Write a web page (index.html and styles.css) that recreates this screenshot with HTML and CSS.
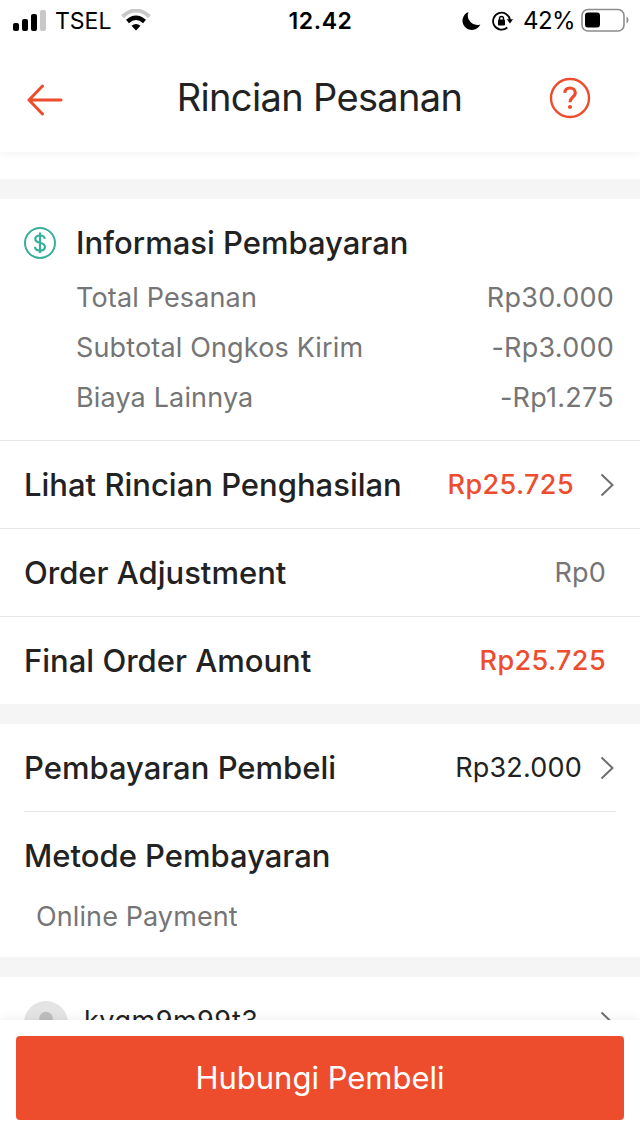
FILE: index.html
```html
<!DOCTYPE html>
<html lang="id">

<head>
  <meta charset="UTF-8">
  <meta name="viewport" content="width=device-width, initial-scale=1.0">
  <title>Rincian Pesanan</title>
  <link rel="stylesheet" href="styles.css">
</head>

<body>
  <div class="status">
    <div class="status-left">
      <svg class="signal" width="34" height="22" viewBox="0 0 34 22">
        <rect x="1" y="14" width="6" height="8" rx="2"/>
        <rect x="10" y="10" width="6" height="12" rx="2"/>
        <rect x="19" y="5" width="6" height="17" rx="2"/>
        <rect x="28" y="1" width="6" height="21" rx="2" fill="#c8c8c8"/>
      </svg>
      <span class="carrier">TSEL</span>
      <svg class="wifi" width="30" height="22" viewBox="0 0 30 22">
        <path d="M1.500 7.500Q15 -4.500 28.500 7.500" fill="none" stroke="#c8c8c8" stroke-width="4"/>
        <path d="M6.500 12.500Q15 5 23.500 12.500" fill="none" stroke="#000" stroke-width="4.400"/>
        <path d="M10.500 16.800Q15 13 19.500 16.800L15 21.500Z"/>
      </svg>
    </div>
    <time class="clock">12.42</time>
    <div class="status-right">
      <svg class="moon" width="20" height="20" viewBox="0 0 20 20">
        <path d="M7.500 1A9.300 9.300 0 1 0 19.300 13.500A9.500 9.500 0 0 1 7.500 1Z"/>
      </svg>
      <svg class="lock" width="21" height="20" viewBox="0 0 21 20">
        <path d="M15.300 16.500A8.500 8.500 0 1 1 18 9" fill="none" stroke="#000" stroke-width="1.800"/>
        <path d="M14.800 8.300H21L18 12.500Z"/>
        <rect x="6" y="8.500" width="7" height="6" rx="1"/>
        <path d="M7.500 9V7.500a2 2 0 0 1 4 0V9" fill="none" stroke="#000" stroke-width="1.400"/>
      </svg>
      <span class="percent">42%</span>
      <svg class="battery" width="48" height="24" viewBox="0 0 48 24">
        <rect x="1" y="1.500" width="42" height="21.500" rx="6" fill="none" stroke="#8c8c8c" stroke-width="1.600"/>
        <rect x="4" y="4.500" width="15" height="15" rx="3"/>
        <path d="M45.500 8.500Q47.500 9.500 47.500 12T45.500 15.500Z" fill="#8c8c8c"/>
      </svg>
    </div>
  </div>

  <header class="header">
    <svg class="back" width="36" height="32" viewBox="0 0 36 32">
      <path d="M34 16H2M15.500 2L2 16L15.500 30" fill="none" stroke="#ee4d2d" stroke-width="3" stroke-linecap="round" stroke-linejoin="round"/>
    </svg>
    <h1 class="title">Rincian Pesanan</h1>
    <svg class="help" width="42" height="42" viewBox="0 0 42 42">
      <circle cx="21" cy="21" r="19" fill="none" stroke="#ee4d2d" stroke-width="2.400"/>
      <path d="M15.800 15.800C16 12.500 18 11 21 11C24 11 26.300 13 26.300 15.900C26.300 20 21 20 21 25.200" fill="none" stroke="#ee4d2d" stroke-width="3.200"/>
      <circle cx="21" cy="30" r="2.100" fill="#ee4d2d"/>
    </svg>
  </header>

  <main class="content">
    <section class="payment">
      <div class="payment-head">
        <svg class="coin" width="32" height="32" viewBox="0 0 32 32" fill="none" stroke="#36b09a">
          <circle cx="16" cy="16" r="15" stroke-width="2"/>
          <path d="M20.800 11.800C20.500 9.500 18.500 8.500 16 8.500C13.300 8.500 11.300 9.700 11.300 12C11.300 14.500 13.500 15.200 16 15.800C18.700 16.400 20.900 17.200 20.900 19.900C20.900 22.300 18.700 23.500 16 23.500C13.200 23.500 11.200 22.300 11 19.800M16 5.500V26" stroke-width="2.200"/>
        </svg>
        <h2 class="heading">Informasi Pembayaran</h2>
      </div>
      <dl class="summary">
        <div class="summary-row"><dt>Total Pesanan</dt><dd>Rp30.000</dd></div>
        <div class="summary-row"><dt>Subtotal Ongkos Kirim</dt><dd>-Rp3.000</dd></div>
        <div class="summary-row"><dt>Biaya Lainnya</dt><dd>-Rp1.275</dd></div>
      </dl>
    </section>

    <section class="rows">
      <a class="row">
        <h2 class="heading">Lihat Rincian Penghasilan</h2>
        <span class="amount amount-red">Rp25.725</span>
        <svg class="chevron" width="14" height="24" viewBox="0 0 14 24"><path d="M1.500 1.500L12.500 12L1.500 22.500"/></svg>
      </a>
      <div class="row row-plain">
        <h2 class="heading">Order Adjustment</h2>
        <span class="amount amount-gray">Rp0</span>
      </div>
      <div class="row row-plain">
        <h2 class="heading">Final Order Amount</h2>
        <span class="amount amount-red">Rp25.725</span>
      </div>
    </section>

    <section class="buyer">
      <a class="row row-buyer">
        <h2 class="heading">Pembayaran Pembeli</h2>
        <span class="amount">Rp32.000</span>
        <svg class="chevron" width="14" height="24" viewBox="0 0 14 24"><path d="M1.500 1.500L12.500 12L1.500 22.500"/></svg>
      </a>
      <div class="method">
        <h2 class="heading">Metode Pembayaran</h2>
        <p class="method-name">Online Payment</p>
      </div>
    </section>

    <section class="user">
      <svg class="avatar" width="44" height="44" viewBox="0 0 44 44">
        <circle cx="22" cy="22" r="22" fill="#e4e4e4"/>
        <circle cx="22" cy="17.500" r="6.800" fill="#bdbdbd"/>
        <path d="M10 34C10 22 34 22 34 34Z" fill="#bdbdbd"/>
      </svg>
      <span class="username">kyqm9m99t3</span>
      <svg class="chevron" width="14" height="24" viewBox="0 0 14 24"><path d="M1.500 1.500L12.500 12L1.500 22.500"/></svg>
    </section>
  </main>

  <footer class="footer">
    <button class="contact">Hubungi Pembeli</button>
  </footer>
</body>

</html>
```

FILE: styles.css
```css
*,
*:after,
*:before {
  box-sizing: border-box;
}

body {
  margin: 0;
  height: 1136px;
  display: flex;
  flex-direction: column;
  overflow: hidden;
  font-family: Inter, "Liberation Sans", sans-serif;
  color: #222;
  background-color: #fff;
}

h1,
h2,
p,
dl,
dd {
  margin: 0;
}

svg {
  display: block;
  flex: none;
}

.status {
  display: grid;
  grid-template-columns: 1fr auto 1fr;
  align-items: center;
  height: 40px;
  padding: 0 11px 0 12px;
  color: #000;
}

.status-left,
.status-right {
  display: flex;
  align-items: center;
}

.status-right {
  justify-content: flex-end;
}

.carrier {
  margin: 2px 10px 0 9px;
  font-size: 23px;
}

.clock {
  padding-top: 2px;
  font-size: 23px;
  font-weight: 600;
  letter-spacing: .6px;
}

.moon {
  margin-top: 2px;
}

.lock {
  margin: 2px 10px 0 11px;
}

.percent {
  margin: 1px 6px 0 0;
  font-size: 24px;
  letter-spacing: -.6px;
}

.header {
  position: relative;
  z-index: 1;
  display: grid;
  grid-template-columns: 1fr auto 1fr;
  align-items: center;
  height: 112px;
  padding: 4px 27px 0;
  background-color: #fff;
  box-shadow: 0 3px 6px rgba(0, 0, 0, .04);
}

.back {
  margin-top: 4px;
}

.title {
  margin: 0 1px 2px 0;
  font-size: 38px;
  font-weight: 400;
  letter-spacing: -.65px;
}

.help {
  margin-right: 22px;
  justify-self: end;
}

.content {
  flex: 1;
  min-height: 0;
  overflow: hidden;
}

.payment {
  height: 262px;
  margin-top: 27px;
  padding: 27px 26px 0 24px;
  border-top: 20px solid #f5f5f5;
  border-bottom: 1px solid #e5e5e5;
}

.payment-head {
  display: flex;
  align-items: center;
  gap: 20px;
  height: 34px;
}

.heading {
  font-size: 31px;
  font-weight: 500;
  line-height: 40px;
}

.summary {
  margin-top: 13px;
  padding-left: 52px;
  color: #757575;
  font-size: 27px;
  letter-spacing: .15px;
}

.summary-row {
  display: flex;
  justify-content: space-between;
  line-height: 50px;
}

.summary-row dd {
  letter-spacing: .25px;
}

.row {
  display: flex;
  align-items: center;
  height: 88px;
  padding: 0 26px 0 24px;
  border-bottom: 1px solid #e5e5e5;
}

.row-plain {
  padding-right: 34px;
}

.row-plain:last-child {
  height: 87px;
  border-bottom: 0;
}

.amount {
  margin-left: auto;
  font-size: 27px;
  letter-spacing: .2px;
}

.amount-red {
  color: #ee4d2d;
  font-weight: 500;
  letter-spacing: .4px;
}

.amount-gray {
  color: #757575;
}

.chevron {
  margin-left: 26px;
  fill: none;
  stroke: #6e6e6e;
  stroke-width: 2;
}

.buyer {
  height: 253px;
  border-top: 20px solid #f5f5f5;
}

.row-buyer {
  margin: 0 24px;
  padding: 0 2px 0 0;
}

.row-buyer .chevron {
  margin-left: 18px;
}

.method {
  padding: 24px 24px 0;
}

.method-name {
  margin: 21px 0 0 12px;
  color: #757575;
  font-size: 27px;
  line-height: 40px;
  letter-spacing: .1px;
}

.user {
  display: flex;
  align-items: center;
  padding: 24px 26px 0 24px;
  border-top: 20px solid #f5f5f5;
}

.username {
  margin: 0 0 5px 16px;
  font-size: 27px;
  letter-spacing: .5px;
}

.user .chevron {
  margin-left: auto;
}

.footer {
  position: relative;
  height: 116px;
  padding: 16px;
  background-color: #fff;
  box-shadow: 0 -2px 10px rgba(0, 0, 0, .06);
}

.contact {
  display: block;
  width: 100%;
  height: 84px;
  padding: 0 0 2px;
  border: 0;
  border-radius: 4px;
  color: #fff;
  background-color: #ee4d2d;
  font-family: inherit;
  font-size: 31px;
}
```
